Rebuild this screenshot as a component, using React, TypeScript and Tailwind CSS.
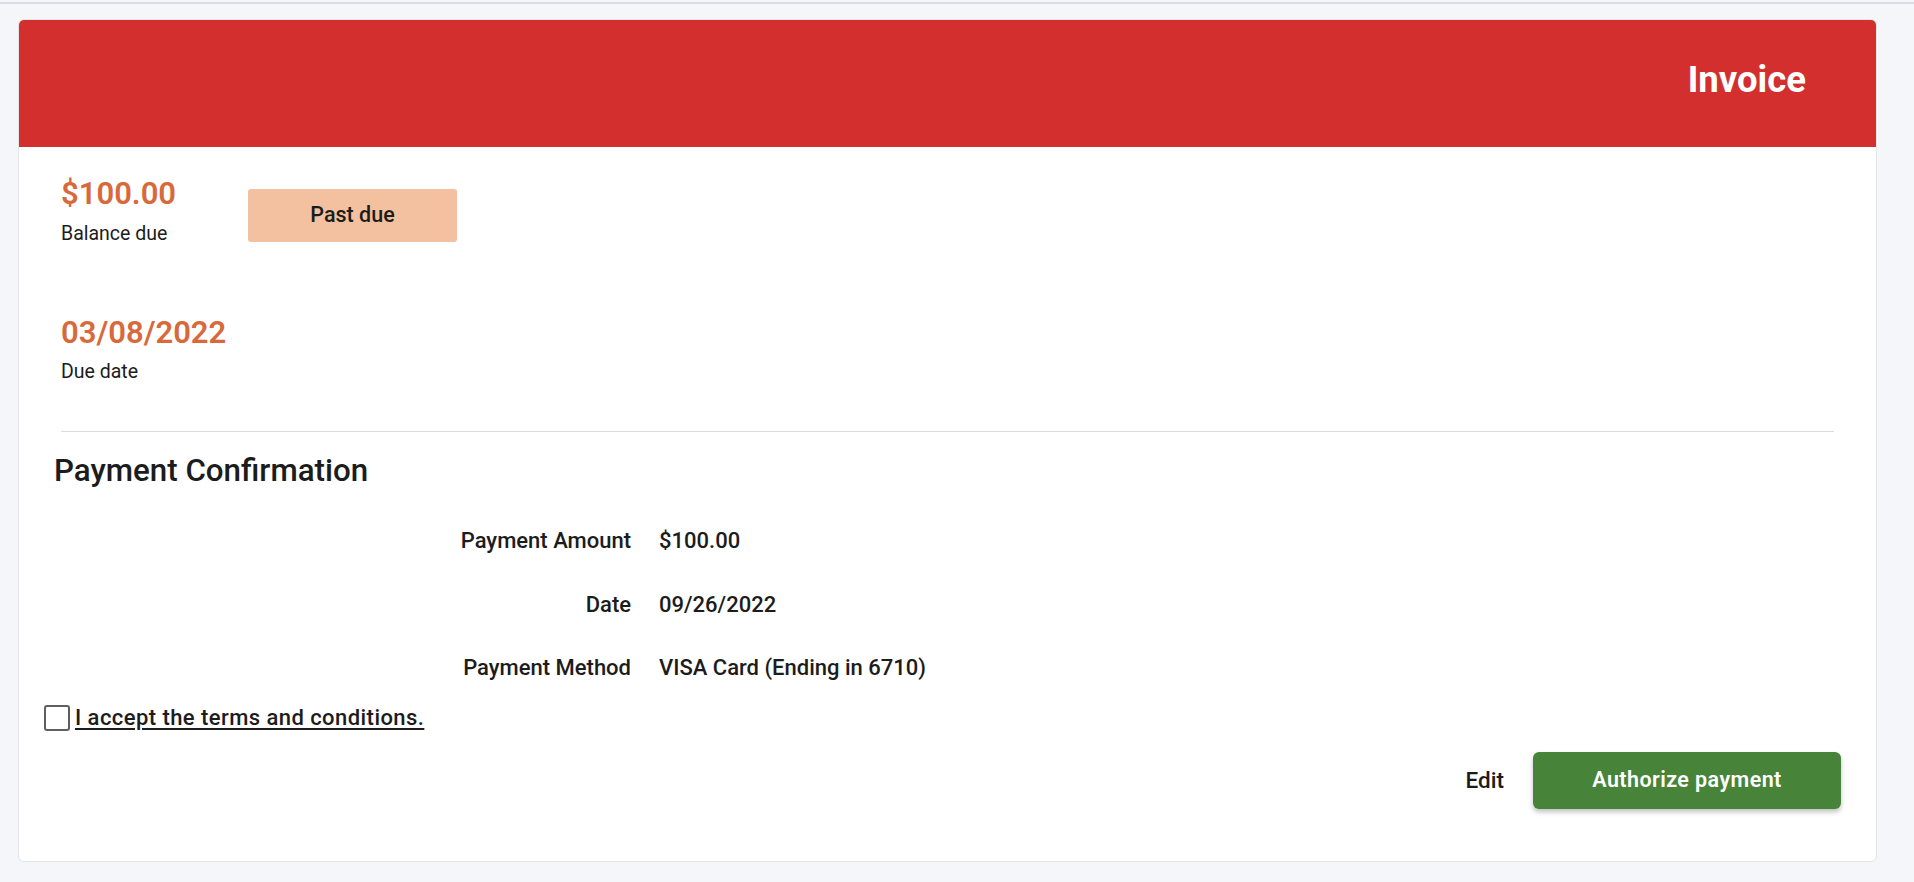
import React from "react";

export default function App() {
  return (
    <div
      className="min-h-screen w-full bg-[#f5f6fa] text-[#1c1c1c]"
      style={{ fontFamily: "Roboto, 'Noto Sans', sans-serif" }}
    >
      <div className="pt-[2px]">
        <div className="h-[2px] bg-[#dcdde2]" />
      </div>
      <div className="pl-[18px] pr-[37px] pt-[15px]">
        <div className="overflow-hidden rounded-[6px] border border-[#e4e5e9] bg-white">
          <div className="flex h-[127px] items-center justify-end bg-[#d32f2f] pb-[8px] pr-[70px]">
            <span className="text-[36.5px] font-bold leading-[40px] text-white">Invoice</span>
          </div>
          <div className="px-[42px] pb-[52px] pt-[28px]">
            <div className="flex items-start">
              <div className="w-[187px] shrink-0">
                <div className="text-[31px] font-semibold leading-[37px] text-[#d8693b]">$100.00</div>
                <div className="mt-[10px] text-[19.5px] leading-[24px]">Balance due</div>
              </div>
              <div className="mt-[14px] flex h-[53px] w-[209px] items-center justify-center rounded-[3px] bg-[#f3c19f] text-[21.5px] font-medium">
                Past due
              </div>
            </div>
            <div className="mt-[68px]">
              <div className="text-[31px] font-semibold leading-[37px] text-[#d8693b]">03/08/2022</div>
              <div className="mt-[9px] text-[19.5px] leading-[24px]">Due date</div>
            </div>
            <div className="mt-[47px] h-px bg-[#dcdcdc]" />
            <div className="ml-[-7px] mt-[20px] text-[31.3px] font-medium leading-[37px]">Payment Confirmation</div>
            <div className="mt-[39px] flex flex-col gap-[37.5px] text-[22px] font-medium leading-[26px]">
              {[
                ["Payment Amount", "$100.00"],
                ["Date", "09/26/2022"],
                ["Payment Method", "VISA Card (Ending in 6710)"],
              ].map(([k, v]) => (
                <div key={k} className="flex gap-[28px]">
                  <div className="w-[570px] text-right">{k}</div>
                  <div>{v}</div>
                </div>
              ))}
            </div>
            <label className="ml-[-17px] mt-[24px] flex items-center gap-[5px]">
              <span className="h-[26px] w-[26px] rounded-[3px] border-[2.5px] border-[#5f5f5f] bg-white" />
              <span className="text-[22px] font-medium leading-[26px] tracking-[0.02em] underline underline-offset-[3px]">
                I accept the terms and conditions.
              </span>
            </label>
            <div className="mr-[-7px] mt-[21px] flex items-center justify-end gap-[29px]">
              <span className="text-[22.5px] font-medium">Edit</span>
              <button className="flex h-[57px] w-[308px] items-center justify-center rounded-[6px] bg-[#47843a] text-[21.5px] font-semibold tracking-[0.02em] text-white shadow-[0_3px_5px_rgba(0,0,0,0.25)]">
                Authorize payment
              </button>
            </div>
          </div>
        </div>
      </div>
    </div>
  );
}
